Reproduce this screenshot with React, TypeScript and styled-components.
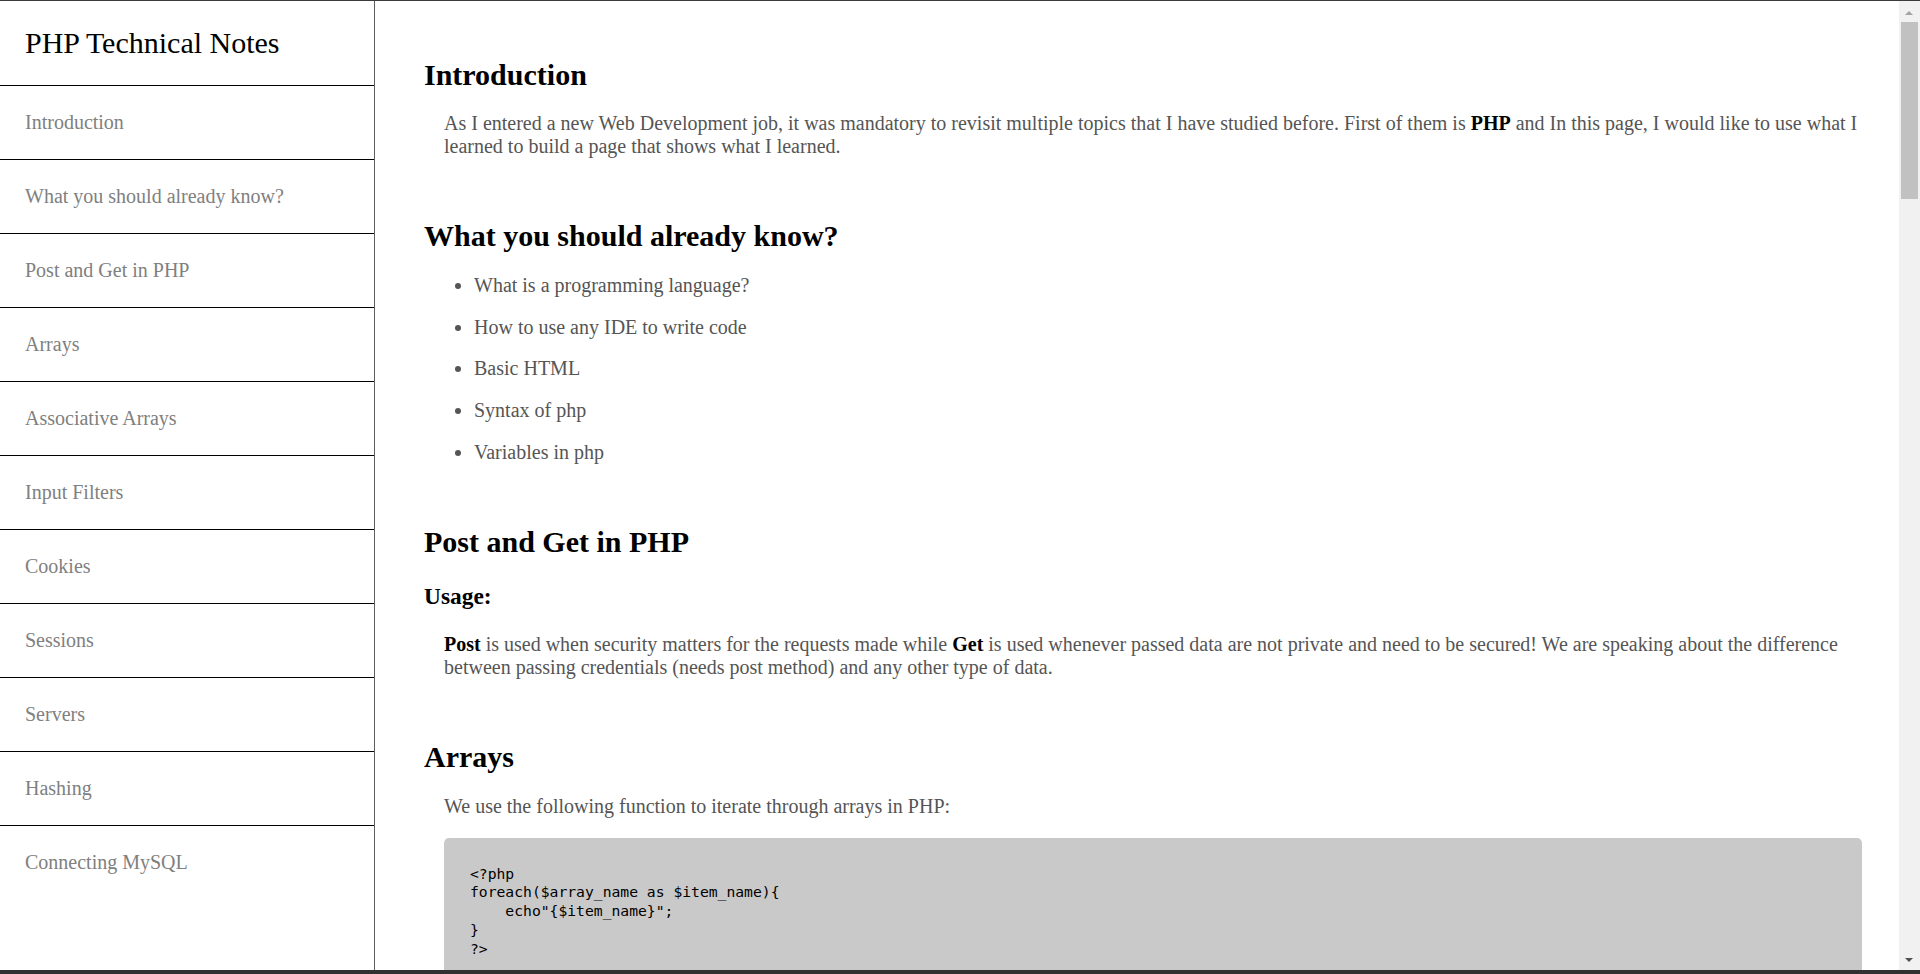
import React from 'react';
import styled, { createGlobalStyle } from 'styled-components';

const GlobalStyle = createGlobalStyle`
  html, body {
    margin: 0;
    padding: 0;
    height: 100%;
    overflow: hidden;
    background: #ffffff;
  }
  body {
    font-family: "Liberation Serif", "Times New Roman", serif;
  }
  #root {
    height: 100%;
  }
`;

const Frame = styled.div`
  height: 100vh;
  box-sizing: border-box;
  display: flex;
  flex-direction: column;
  border-top: 1px solid #3a3a3a;
`;

const Body = styled.div`
  flex: 1;
  min-height: 0;
  display: flex;
`;

const BottomBar = styled.div`
  flex-shrink: 0;
  height: 4px;
  background: #313131;
`;

const Nav = styled.nav`
  width: 375px;
  flex-shrink: 0;
  box-sizing: border-box;
  border-right: 1px solid #5e5e5e;
  display: flex;
  flex-direction: column;
`;

const NavHeader = styled.header`
  padding: 24.75px 25px;
  font-size: 30px;
  line-height: 34.5px;
  color: #000;
  border-bottom: 1px solid #000;
`;

const NavList = styled.ul`
  margin: 0;
  padding: 0;
  list-style: none;
`;

const NavItem = styled.li`
  border-bottom: 1px solid #000;
  &:last-child {
    border-bottom: none;
  }
`;

const NavLink = styled.a`
  display: block;
  padding: 25px;
  font-size: 20px;
  line-height: 23px;
  color: #808080;
  text-decoration: none;
`;

const Main = styled.main`
  flex: 1;
  min-width: 0;
  overflow: hidden;
  box-sizing: border-box;
  padding: 57px 37px 60px 49px;
`;

const ScrollRail = styled.div`
  width: 21px;
  flex-shrink: 0;
  background: #f1f1f1;
  display: flex;
  flex-direction: column;
`;

const RailButton = styled.div<{ $up?: boolean }>`
  height: 21px;
  flex-shrink: 0;
  display: flex;
  align-items: center;
  justify-content: center;
  padding-top: ${(p) => (p.$up ? '2px' : '0')};
  box-sizing: border-box;
`;

const Arrow = styled.span<{ $up?: boolean; $color: string }>`
  width: 0;
  height: 0;
  margin-right: 1px;
  border-left: 4px solid transparent;
  border-right: 4px solid transparent;
  ${(p) =>
    p.$up ? `border-bottom: 4px solid ${p.$color};` : `border-top: 4px solid ${p.$color};`}
`;

const RailTrack = styled.div`
  flex: 1;
  padding: 0 2px;
`;

const RailThumb = styled.div`
  height: 177px;
  background: #c1c1c1;
`;

const Section = styled.section<{ $gap?: number }>`
  display: flex;
  flex-direction: column;
  gap: 20px;
  & + & {
    margin-top: ${(p) => p.$gap ?? 63}px;
  }
`;

const Heading = styled.h2`
  margin: 0;
  font-size: 30px;
  line-height: 34.5px;
  font-weight: bold;
  color: #000;
`;

const SubHeading = styled.h3`
  margin: 4px 0 3px;
  font-size: 23.4px;
  line-height: 26.9px;
  font-weight: bold;
  color: #000;
`;

const Text = styled.p<{ $lift?: boolean }>`
  margin: ${(p) => (p.$lift ? '-1px' : '0')} 0 0 20px;
  font-size: 20px;
  line-height: 23px;
  color: #555;

  b {
    color: #000;
  }
`;

const List = styled.ul`
  margin: 1px 0 0;
  padding-left: 50px;
  font-size: 20px;
  line-height: 23px;
  color: #555;

  li + li {
    margin-top: 18.67px;
  }
`;

const Code = styled.pre`
  margin: 0 0 0 20px;
  padding: 27px 26px 28px;
  background: #c9c9c9;
  border-radius: 5px;
  font-family: "DejaVu Sans Mono", "Liberation Mono", monospace;
  font-size: 14.7px;
  line-height: 18.75px;
  color: #000;
  white-space: pre;
  overflow: hidden;
`;

const navItems = [
  'Introduction',
  'What you should already know?',
  'Post and Get in PHP',
  'Arrays',
  'Associative Arrays',
  'Input Filters',
  'Cookies',
  'Sessions',
  'Servers',
  'Hashing',
  'Connecting MySQL',
];

const toId = (s: string) => s.replace(/[^A-Za-z]+/g, '_');

export default function App() {
  return (
    <>
      <GlobalStyle />
      <Frame>
        <Body>
          <Nav id="navbar">
            <NavHeader>PHP Technical Notes</NavHeader>
            <NavList>
              {navItems.map((item) => (
                <NavItem key={item}>
                  <NavLink className="nav-link" href={`#${toId(item)}`}>
                    {item}
                  </NavLink>
                </NavItem>
              ))}
            </NavList>
          </Nav>
          <Main id="main-doc">
            <Section className="main-section" id="Introduction">
              <Heading>Introduction</Heading>
              <Text $lift>
                As I entered a new Web Development job, it was mandatory to revisit multiple topics that I have
                studied before. First of them is <b>PHP</b> and In this page, I would like to use what I learned
                to build a page that shows what I learned.
              </Text>
            </Section>

            <Section className="main-section" id="What_you_should_already_know_" $gap={61}>
              <Heading>What you should already know?</Heading>
              <List>
                <li>What is a programming language?</li>
                <li>How to use any IDE to write code</li>
                <li>Basic HTML</li>
                <li>Syntax of php</li>
                <li>Variables in php</li>
              </List>
            </Section>

            <Section className="main-section" id="Post_and_Get_in_PHP" $gap={61}>
              <Heading>Post and Get in PHP</Heading>
              <SubHeading>Usage:</SubHeading>
              <Text>
                <b>Post</b> is used when security matters for the requests made while <b>Get</b> is used whenever
                passed data are not private and need to be secured! We are speaking about the difference between
                passing credentials (needs post method) and any other type of data.
              </Text>
            </Section>

            <Section className="main-section" id="Arrays" $gap={63}>
              <Heading>Arrays</Heading>
              <Text>We use the following function to iterate through arrays in PHP:</Text>
              <Code>{`<?php
foreach($array_name as $item_name){
    echo"{$item_name}";
}
?>`}</Code>
            </Section>

            <Section className="main-section" id="Associative_Arrays">
              <Heading>Associative Arrays</Heading>
              <Text>
                Associative arrays are arrays that use named keys that you assign to them. We declare them as
                follows:
              </Text>
              <Code>{`<?php
$age = array("Peter"=>"35", "Ben"=>"37", "Joe"=>"43");
?>`}</Code>
            </Section>

            <Section className="main-section" id="Input_Filters">
              <Heading>Input Filters</Heading>
              <Text>
                PHP filters are used to validate and sanitize external input. The filter_var() function both
                validates and sanitizes data.
              </Text>
            </Section>
          </Main>
          <ScrollRail aria-hidden="true">
            <RailButton $up>
              <Arrow $up $color="#a3a3a3" />
            </RailButton>
            <RailTrack>
              <RailThumb />
            </RailTrack>
            <RailButton>
              <Arrow $color="#505050" />
            </RailButton>
          </ScrollRail>
        </Body>
        <BottomBar />
      </Frame>
    </>
  );
}
